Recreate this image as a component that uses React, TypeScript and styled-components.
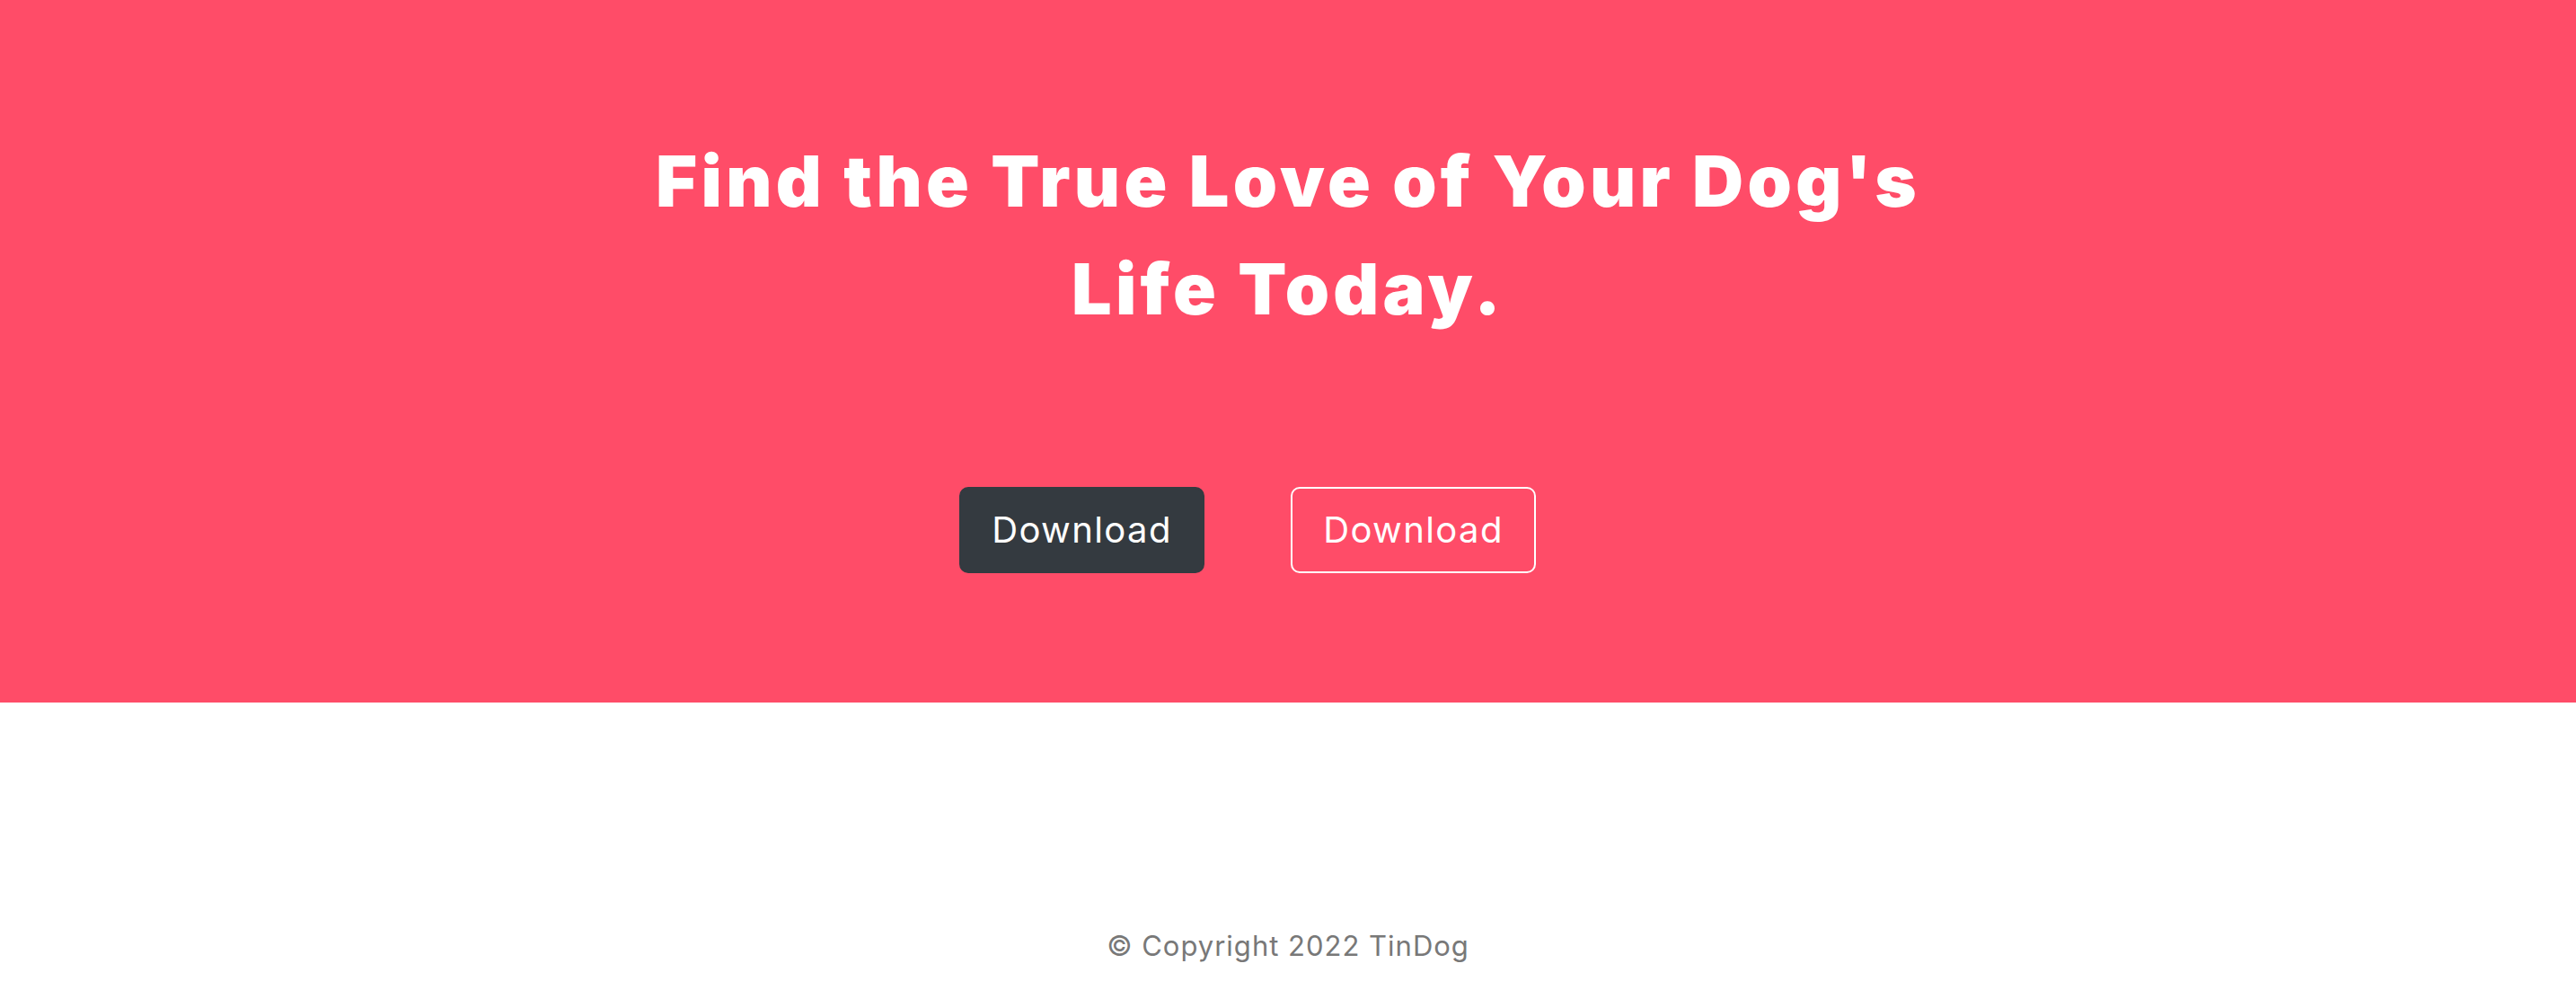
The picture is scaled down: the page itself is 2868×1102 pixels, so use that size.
import React from "react";
import styled, { createGlobalStyle } from "styled-components";

const GlobalStyle = createGlobalStyle`
  html, body {
    margin: 0;
    padding: 0;
    background: #ffffff;
  }
  * { box-sizing: border-box; }
`;

const Page = styled.div`
  display: flex;
  flex-direction: column;
  width: 100%;
  font-family: Inter, "Liberation Sans", sans-serif;
`;

const CtaSection = styled.section`
  background: #ff4c68;
  padding: 141px 0 144px;
  display: flex;
  flex-direction: column;
  align-items: center;
`;

const BigHeading = styled.h3`
  margin: 0;
  width: 1700px;
  text-align: center;
  color: #ffffff;
  font-family: Inter, "DejaVu Sans", sans-serif;
  font-weight: 900;
  font-size: 79px;
  line-height: 120px;
  letter-spacing: 4.3px;
`;

const ButtonRow = styled.div`
  display: flex;
  justify-content: center;
  gap: 96px;
  margin-top: 161px;
  padding-right: 90px;
`;

const DownloadButton = styled.button<{ $variant: "dark" | "outline" }>`
  width: 273px;
  height: 96px;
  padding: 0;
  border-radius: 10px;
  font-family: Inter, "Liberation Sans", sans-serif;
  font-weight: 400;
  font-size: 40px;
  line-height: 60px;
  letter-spacing: 1.4px;
  color: #ffffff;
  cursor: pointer;
  background: ${(p) => (p.$variant === "dark" ? "#343a40" : "transparent")};
  border: 2px solid ${(p) => (p.$variant === "dark" ? "#343a40" : "#ffffff")};
`;

const Footer = styled.footer`
  padding: 247px 0 24px;
  text-align: center;
`;

const FooterText = styled.p`
  margin: 0;
  color: #787878;
  font-family: Inter, "Liberation Sans", sans-serif;
  font-size: 31px;
  line-height: 48px;
  letter-spacing: 1px;
`;

export default function App() {
  return (
    <>
      <GlobalStyle />
      <Page>
        <CtaSection>
          <BigHeading>
            Find the True Love of Your Dog's
            <br />
            Life Today.
          </BigHeading>
          <ButtonRow>
            <DownloadButton $variant="dark">Download</DownloadButton>
            <DownloadButton $variant="outline">Download</DownloadButton>
          </ButtonRow>
        </CtaSection>
        <Footer>
          <FooterText>© Copyright 2022 TinDog</FooterText>
        </Footer>
      </Page>
    </>
  );
}
